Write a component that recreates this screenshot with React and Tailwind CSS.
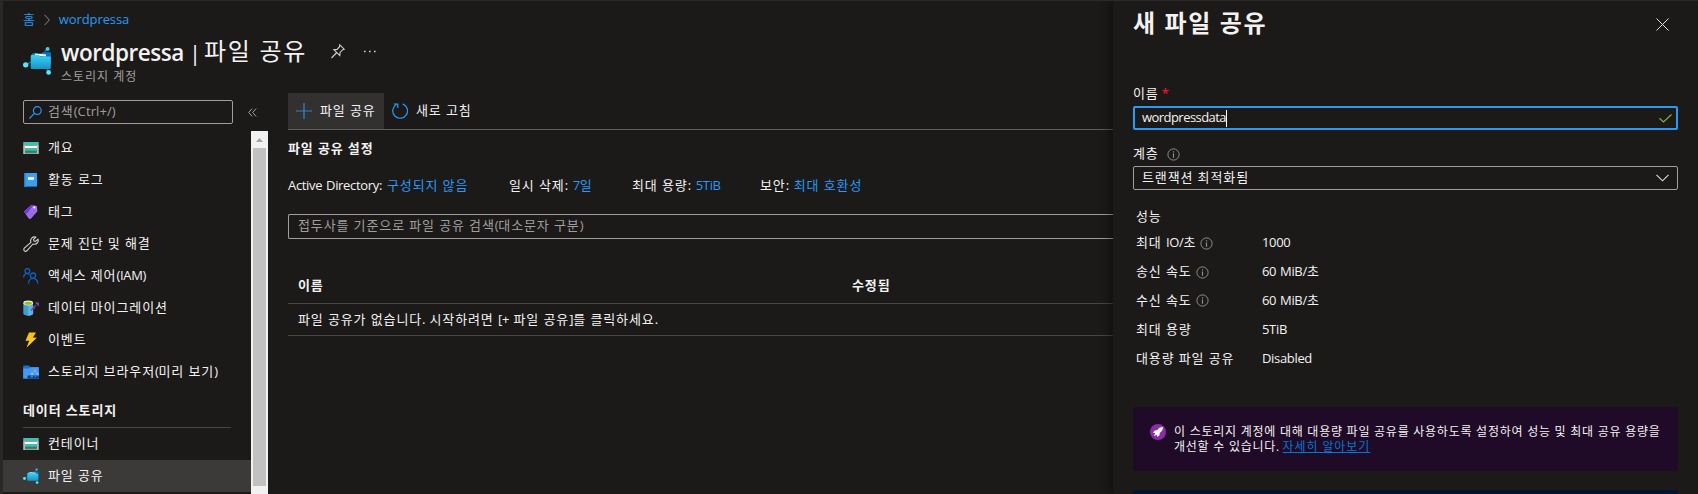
import React from "react";

/* Text with separate tracking for Hangul and Latin runs. */
function T({ children, ko = "tracking-[0.88px]", en = "tracking-[-0.33px] [word-spacing:0.8px]" }) {
  const runs = String(children).split(/([\u3131-\uD79D][\u3131-\uD79D ]*)/).filter(Boolean);
  return (
    <span className="whitespace-pre pb-[2px]">
      {runs.map((r, i) => (
        <span key={i} className={/[\u3131-\uD79D]/.test(r) ? ko : en}>{r}</span>
      ))}
    </span>
  );
}

function StorageIcon() {
  return (
    <svg width="16" height="16" viewBox="0 0 16 16">
      <rect x="0.5" y="2" width="15" height="12" fill="#9b9b9b" />
      <rect x="0.5" y="2" width="15" height="3" fill="#37c2b1" />
      <rect x="2" y="6" width="12" height="2" fill="#fff" />
      <rect x="2" y="8" width="12" height="2" fill="#37c2b1" />
      <rect x="2" y="10.6" width="12" height="2.2" fill="#258277" />
      <path d="M.5 5h1v9h-1zM14.5 5h1v9h-1z" fill="#d5d5d5" />
    </svg>
  );
}

function LogIcon() {
  return (
    <svg width="16" height="16" viewBox="0 0 16 16">
      <rect x="1.3" y="1" width="12.7" height="14" rx="0.8" fill="#0f6cbd" />
      <rect x="3" y="1" width="11" height="13" rx="0.6" fill="#3ba0ee" />
      <rect x="5" y="5.2" width="6" height="2.6" fill="#fff" />
      <rect x="1.3" y="1" width="1.7" height="14" fill="#2f8fe0" />
    </svg>
  );
}

function TagIcon() {
  return (
    <svg width="16" height="16" viewBox="0 0 16 16">
      <path d="M1 7.6 8.2 1l5.6 1 .6 5.2L7.4 15 5.8 14.6z" fill="#a67af4" />
      <path d="M1 7.6 8.2 1l2.4.3-7 8.7z" fill="#7036d8" />
      <path d="M3.6 10 11 3l3 4.2L7.4 15z" fill="#9b6be0" />
      <circle cx="11.2" cy="3.6" r="1" fill="#fff" />
    </svg>
  );
}

function WrenchIcon() {
  return (
    <svg width="16" height="16" viewBox="0 0 16 16" fill="none" stroke="#d6d4d2" strokeWidth="1.1" strokeLinejoin="round">
      <path d="M12.9 1.1 10.6 3.4l.3 1.6 1.7.4 2.4-2.3c.9 2.6-1 5.2-3.6 5.2-.6 0-1 0-1.4-.3L4 14.7a1.7 1.7 0 0 1-2.7-2.5L7.900 6.300C6.800 3 9.600.1 12.900 1.100z" />
    </svg>
  );
}

function PeopleIcon() {
  return (
    <svg width="16" height="16" viewBox="0 0 16 16" fill="none" stroke="#1160c4" strokeWidth="1.3">
      <circle cx="4.4" cy="3" r="2.4" />
      <path d="M.7 9.600c0-2.400 1.500-4 3.500-4 .9 0 1.700.3 2.300.8" />
      <circle cx="10" cy="7.600" r="2.600" />
      <path d="M5.600 15.400c0-3 2-5.100 4.400-5.100s4.800 2.100 4.800 5.100" />
    </svg>
  );
}

function MigrateIcon() {
  return (
    <svg width="16" height="16" viewBox="0 0 16 16">
      <path d="M.3 3v10.300C.3 14.800 2.600 15.700 5.200 15.700s4.900-.9 4.900-2.400V3z" fill="#3e9fd0" />
      <path d="M5.200 5.200h4.900v8.100c0 1.500-2.300 2.400-4.900 2.400z" fill="#62b5e2" />
      <ellipse cx="5.200" cy="3" rx="4.900" ry="2.400" fill="#e6f2d0" />
      <ellipse cx="5.200" cy="3.200" rx="3.700" ry="1.500" fill="#8cc11f" />
      <path d="M8 10.500 13 5.200M10 6.800l2 2" stroke="#7a3f98" strokeWidth="1.400" fill="none" />
      <path d="M11.800 2.600h4v4z" fill="#8a4aa8" />
    </svg>
  );
}

function BoltIcon() {
  return (
    <svg width="16" height="16" viewBox="0 0 16 16">
      <path d="M6 .5h7L9.800 5.800h3.900L3.600 15.600l2.800-6.800H2.500z" fill="#fbc015" />
      <path d="M9.800 5.800h3.900L3.600 15.600l2.800-6.800z" fill="#ffd21f" opacity=".6" />
    </svg>
  );
}

function BrowserIcon() {
  return (
    <svg width="16" height="16" viewBox="0 0 16 16">
      <path d="M.2 2.200q0-.7.7-.7h5l1.600 1.500h7.600q.7 0 .7.700V14.500H.2z" fill="#1b6fd0" />
      <path d="M.2 4.600h6l1.400-1.300h8.200v11.200H.2z" fill="#4a98ee" />
      <path d="M8 8.500h2.500v2.500H8z" fill="#86bdf7" />
      <path d="M11 5.500h2.300v2.500H11zM13 8.500h2.800v3H13z" fill="#6cb0f5" />
      <path d="M4.500 11.500H15.800v3H4.500z" fill="#0a3f8c" />
      <path d="M7.500 11.500h2.500v2H7.500zM11.500 11.500h2v1.500h-2z" fill="#2f7fe0" />
    </svg>
  );
}

function FileShareIcon({ size = 16 }) {
  return (
    <svg width={size} height={size} viewBox="0 0 30 30">
      <defs>
        <linearGradient id="fsGrad" x1="0" y1="0" x2="0" y2="1">
          <stop offset="0" stopColor="#35d4f5" />
          <stop offset="1" stopColor="#1a92c6" />
        </linearGradient>
      </defs>
      <path d="M4 19 9 16M24 3l-3 6M26 26l-3-5" stroke="#1277a8" strokeWidth="1.200" />
      <path d="M9 8.500q0-1 1-1l8 .2 2.500-1.200H28q1 0 1 1V20H9z" fill="#0d6fc0" />
      <path d="M12 7.800l12 .9-.4 2.200-11-1z" fill="#fff" />
      <path d="M8 10.500q0-1.200 1.200-1.200h7l2 1.600H27.500q1.200 0 1.200 1.200v10.600q0 1.200-1.200 1.200H9.200Q8 23.900 8 22.700z" fill="url(#fsGrad)" />
      <circle cx="2.800" cy="19.500" r="2.800" fill="#50e6ff" />
      <circle cx="25.500" cy="3" r="2" fill="#3fd3f2" />
      <circle cx="26.500" cy="27.300" r="2.500" fill="#50e6ff" />
    </svg>
  );
}

function InfoIcon() {
  return (
    <svg width="13" height="13" viewBox="0 0 13 13" fill="none" stroke="#8f8d8b">
      <circle cx="6.500" cy="6.500" r="5.600" />
      <path d="M6.500 5.500v4.300M6.500 3.200v1.300" strokeWidth="1.200" />
    </svg>
  );
}

const NAV = [
  ["개요", StorageIcon],
  ["활동 로그", LogIcon],
  ["태그", TagIcon],
  ["문제 진단 및 해결", WrenchIcon],
  ["액세스 제어(IAM)", PeopleIcon],
  ["데이터 마이그레이션", MigrateIcon],
  ["이벤트", BoltIcon],
  ["스토리지 브라우저(미리 보기)", BrowserIcon],
];

function NavRow({ label, Icon, selected }) {
  return (
    <div className={"flex h-8 shrink-0 items-center gap-[9px] pl-5 " + (selected ? "bg-[#3b3a39]" : "")}>
      <Icon />
      <T>{label}</T>
    </div>
  );
}

const SETTINGS = [
  ["Active Directory:", "구성되지 않음", "w-[221px]"],
  ["일시 삭제:", "7일", "w-[123px]"],
  ["최대 용량:", "5TiB", "w-[128px]"],
  ["보안:", "최대 호환성", ""],
];

const PERF = [
  ["최대 IO/초", "1000", true],
  ["송신 속도", "60 MiB/초", true],
  ["수신 속도", "60 MiB/초", true],
  ["최대 용량", "5TiB", false],
  ["대용량 파일 공유", "Disabled", false],
];

function Header() {
  return (
    <div className="h-[92px] shrink-0 pl-5">
      <div className="flex h-[38px] items-center text-[#2899f5]">
        <T>홈</T>
        <svg className="mr-[9px] ml-[8px]" width="6" height="12" viewBox="0 0 6 12" fill="none" stroke="#8a8886">
          <path d="M.5.800 5.300 6 .5 11.200" />
        </svg>
        <T en="tracking-[-0.1px]">wordpressa</T>
      </div>
      <div className="flex">
        <div className="mt-[7px] mr-[9px]">
          <FileShareIcon size={29} />
        </div>
        <div>
          <div className="flex h-[30px] items-center pb-[5px] text-2xl leading-[31px]">
            <span className="mt-[2px] w-[124px] text-[22.5px] font-semibold tracking-[-0.45px]">wordpressa</span>
            <span className="mt-[1px] mr-[3px] ml-[4px] text-[22px] font-normal">|</span>
            <T ko="tracking-[1.7px]">파일 공유</T>
            <svg className="ml-[24px]" width="14" height="15" viewBox="0 0 14 15" fill="none" stroke="#d2d0ce" strokeWidth="1.100">
              <path d="M8.800.800l4.400 4.400-1.400.5-2.700 2.700-.3 3.200-5.900-5.900 3.200-.3 2.400-2.700zM5.800 8.500.5 14" />
            </svg>
            <svg className="ml-[19px]" width="12" height="3" viewBox="0 0 12 3" fill="#d2d0ce">
              <path d="M0 .800h1.600v1.500H0zM5 .800h1.600v1.500H5zM10 .800h1.600v1.500H10z" />
            </svg>
          </div>
          <div className="text-[12px] leading-[16px] text-[#a19f9d]">
            <T ko="tracking-[1px]">스토리지 계정</T>
          </div>
        </div>
      </div>
    </div>
  );
}

function Sidebar() {
  return (
    <aside className="flex w-[265px] shrink-0 flex-col">
      <div className="flex h-[39px] shrink-0 pt-[8px] pl-5">
        <div className="flex h-6 w-[210px] items-center gap-[6px] rounded-xs border border-[#a19f9d] pl-[5px] text-[#a19f9d]">
          <svg width="13" height="13" viewBox="0 0 13 13" fill="none" stroke="#2899f5" strokeWidth="1.200">
            <circle cx="8.300" cy="4.600" r="3.900" />
            <path d="M5.400 7.400.4 12.500" />
          </svg>
          <T en="tracking-[0.1px]">검색(Ctrl+/)</T>
        </div>
        <svg className="mt-[8px] ml-[15px]" width="9" height="9" viewBox="0 0 9 9" fill="none" stroke="#a19f9d">
          <path d="M4.200.5.700 4.500l3.500 4M8.200.5 4.700 4.500l3.500 4" />
        </svg>
      </div>
      <div className="flex min-h-0 flex-1">
        <nav className="flex w-[248px] flex-col overflow-hidden pt-px">
          {NAV.map(([label, Icon]) => (
            <NavRow key={label} label={label} Icon={Icon} />
          ))}
          <div className="mr-5 ml-5 flex h-10 shrink-0 items-center border-b border-[#484644] pt-[6px] font-semibold">
            <T>데이터 스토리지</T>
          </div>
          <NavRow label="컨테이너" Icon={StorageIcon} />
          <NavRow label="파일 공유" Icon={FileShareIcon} selected />
        </nav>
        <div className="flex w-[17px] flex-col items-center bg-[#f1f1f1]">
          <div className="flex h-[17px] items-center justify-center">
            <svg width="7" height="4" viewBox="0 0 7 4" fill="#a3a3a3">
              <path d="M0 4 3.500 0 7 4z" />
            </svg>
          </div>
          <div className="h-[338px] w-[13px] bg-[#c1c1c1]" />
        </div>
      </div>
    </aside>
  );
}

function Main() {
  return (
    <main className="ml-5 flex min-w-0 flex-1 flex-col">
      <div className="mt-px flex h-[37px] shrink-0 border-b border-[#605e5c]">
        <div className="flex w-24 items-center gap-2 bg-[#323130] pl-2">
          <svg width="16" height="16" viewBox="0 0 16 16" stroke="#2f86d2" strokeWidth="1.200">
            <path d="M8 0v16M0 8h16" />
          </svg>
          <T>파일 공유</T>
        </div>
        <div className="flex items-center gap-2 pl-2">
          <svg width="16" height="16" viewBox="0 0 16 16" fill="none" stroke="#2899f5" strokeWidth="1.200">
            <path d="M10.700.900A7.400 7.400 0 1 1 4.300 1.500M1.800 1h4v4" />
          </svg>
          <T>새로 고침</T>
        </div>
      </div>
      <div className="flex h-[38px] shrink-0 items-center font-semibold">
        <T>파일 공유 설정</T>
      </div>
      <div className="flex h-[36px] shrink-0 items-center">
        {SETTINGS.map(([k, v, w]) => (
          <div key={k} className={"flex shrink-0 gap-[5px] " + w}>
            <T>{k}</T>
            <span className="text-[#2899f5]"><T>{v}</T></span>
          </div>
        ))}
      </div>
      <div className="mt-[10px] flex h-[25px] shrink-0 items-center rounded-l-xs border border-r-0 border-[#a19f9d] pb-px pl-[9px] text-[#a19f9d]">
        <T>접두사를 기준으로 파일 공유 검색(대소문자 구분)</T>
      </div>
      <div className="mt-[31px] flex h-[34px] shrink-0 items-center border-b border-[#484644] pb-px pl-[10px] font-semibold">
        <div className="flex w-[554px]"><T>이름</T></div>
        <T>수정됨</T>
      </div>
      <div className="flex h-8 shrink-0 items-center border-b border-[#484644] pl-[10px]">
        <T en="tracking-[-0.1px] [word-spacing:0.8px]">파일 공유가 없습니다. 시작하려면 [+ 파일 공유]를 클릭하세요.</T>
      </div>
    </main>
  );
}

function Panel() {
  return (
    <section className="flex w-[585px] shrink-0 flex-col overflow-hidden pr-5 pl-5 shadow-[-3px_0_10px_rgba(0,0,0,0.45)]">
      <div className="flex h-[80px] shrink-0 justify-between pr-[9px]">
        <h1 className="pt-[5px] text-2xl leading-[34px] font-bold"><T ko="tracking-[1.6px]">새 파일 공유</T></h1>
        <svg className="mt-[17px]" width="13" height="13" viewBox="0 0 13 13" stroke="#e1dfdd">
          <path d="M.5.500l12 12M12.500.500l-12 12" />
        </svg>
      </div>
      <div className="flex h-[25px] shrink-0 items-center gap-[3px]">
        <T>이름</T>
        <span className="pb-[2px] font-semibold text-[#e3192b]">*</span>
      </div>
      <div className="flex h-6 shrink-0 items-center justify-between rounded-xs border-2 border-[#2899f5] pr-[4px] pl-[7px]">
        <div className="flex items-center"><T en="tracking-[-0.55px]">wordpressdata</T><span className="h-[17px] w-px bg-white" /></div>
        <svg width="13" height="9" viewBox="0 0 13 9" fill="none" stroke="#7fb13c" strokeWidth="1.200">
          <path d="M.5 4.200 4.500 8 12.500.500" />
        </svg>
      </div>
      <div className="flex h-9 shrink-0 items-center gap-2 pt-[12px]">
        <T>계층</T>
        <InfoIcon />
      </div>
      <div className="flex h-6 shrink-0 items-center justify-between rounded-xs border border-[#a19f9d] pr-[8px] pl-[8px]">
        <T>트랜잭션 최적화됨</T>
        <svg width="13" height="8" viewBox="0 0 13 8" fill="none" stroke="#e1dfdd" strokeWidth="1.100">
          <path d="M.5.800l6 6 6-6" />
        </svg>
      </div>
      <div className="flex shrink-0 flex-col pt-[14px] pl-[3px]">
        <div className="flex h-[25px] items-center"><T>성능</T></div>
        {PERF.map(([k, v, info]) => (
          <div key={k} className="flex h-[28.800px] items-center">
            <div className="flex w-[126px] items-center gap-[4px]">
              <T>{k}</T>
              {info && <InfoIcon />}
            </div>
            <T>{v}</T>
          </div>
        ))}
      </div>
      <div className="mt-[34px] flex h-16 shrink-0 gap-[8px] rounded-xs bg-[#1f0a27] pt-[17px] pl-[17px]">
        <svg width="16" height="16" viewBox="0 0 16 16">
          <circle cx="8" cy="8" r="8" fill="#8a2da5" />
          <path d="M13 3c-2.600 0-4.600 1.200-6 3.300L4.700 6.500 3 8.800l2.200.2L4 12l3-1.200.2 2.200 2.300-1.700.2-2.300C11.800 7.600 13 5.600 13 3z" fill="#fff" />
        </svg>
        <div className="text-[12px] leading-[15px]">
          <div><T ko="tracking-[0.75px]">이 스토리지 계정에 대해 대용량 파일 공유를 사용하도록 설정하여 성능 및 최대 공유 용량을</T></div>
          <div>
            <T ko="tracking-[0.75px]" en="tracking-[0.1px]">개선할 수 있습니다. </T>
            <a className="text-[#0078d4] underline"><T ko="tracking-[0.9px]">자세히 알아보기</T></a>
          </div>
        </div>
      </div>
      <div className="mt-[19px] h-16 shrink-0 rounded-xs bg-[#001433]" />
    </section>
  );
}

export default function App() {
  return (
    <div className="flex h-[494px] w-[1698px] overflow-hidden border-t border-[#2b2a29] bg-[#1b1a19] font-['Open_Sans','Noto_Sans_CJK_KR',sans-serif] text-[13px] leading-[18px] text-[#f3f2f1]">
      <div className="w-[3px] shrink-0 bg-[#292827]" />
      <div className="flex min-w-0 flex-1 flex-col">
        <Header />
        <div className="-mt-px flex min-h-0 flex-1">
          <Sidebar />
          <Main />
        </div>
      </div>
      <Panel />
    </div>
  );
}
